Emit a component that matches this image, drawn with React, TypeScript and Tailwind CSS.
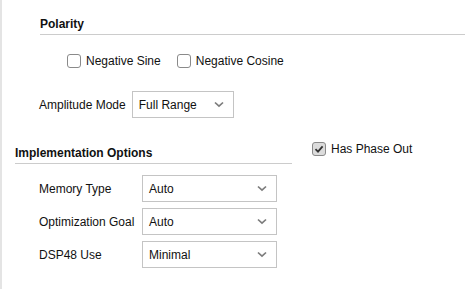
import React from "react";

function Checkbox({ checked = false }: { checked?: boolean }) {
  return (
    <span
      className={
        "flex h-[14px] w-[14px] shrink-0 items-center justify-center rounded-[3px] border border-[#8a8a8a] " +
        (checked ? "bg-[#dcdcdc]" : "bg-white")
      }
    >
      {checked && (
        <svg width="10" height="10" viewBox="0 0 10 10">
          <polyline points="1.5,5.2 4,7.6 8.6,2.4" fill="none" stroke="#333" strokeWidth="1.8" />
        </svg>
      )}
    </span>
  );
}

function Check({ label, checked }: { label: string; checked?: boolean }) {
  return (
    <label className="flex items-center gap-[5px] leading-[14px]">
      <Checkbox checked={checked} />
      <span>{label}</span>
    </label>
  );
}

function Select({ value, width }: { value: string; width: string }) {
  return (
    <div
      className={
        "flex h-[27px] items-center justify-between border border-[#c4c4c4] bg-white pl-[6px] pr-[9px] " + width
      }
    >
      <span>{value}</span>
      <svg width="10" height="7" viewBox="0 0 10 7">
        <polyline points="1,1.5 5,5.2 9,1.5" fill="none" stroke="#7c7c7c" strokeWidth="1.7" />
      </svg>
    </div>
  );
}

const rows = [
  { label: "Memory Type", value: "Auto" },
  { label: "Optimization Goal", value: "Auto" },
  { label: "DSP48 Use", value: "Minimal" },
];

export default function App() {
  return (
    <div className="flex h-[289px] w-[465px] overflow-hidden bg-white font-['Liberation_Sans',Arial,sans-serif] text-[12px] text-[#111]">
      <div className="w-[2px] shrink-0 bg-[#e4e4e4]" />
      <div className="flex flex-1 flex-col pl-[13px]">
        <div className="ml-[25px] mt-[17px] border-b border-[#cccccc] pb-[3px] font-bold leading-[14px]">
          Polarity
        </div>
        <div className="ml-[52px] mt-[19px] flex gap-[16px]">
          <Check label="Negative Sine" />
          <Check label="Negative Cosine" />
        </div>
        <div className="ml-[24px] mt-[23px] flex items-center gap-[6px]">
          <span>Amplitude Mode</span>
          <Select value="Full Range" width="w-[102px]" />
        </div>
        <div className="mt-[23px] flex">
          <div className="w-[277px] pt-[5px]">
            <div className="border-b border-[#cccccc] pb-[3px] font-bold leading-[14px]">
              Implementation Options
            </div>
            <div className="ml-[24px] mt-[11px] flex flex-col gap-[6px]">
              {rows.map((r) => (
                <div key={r.label} className="flex items-center">
                  <span className="w-[103px]">{r.label}</span>
                  <Select value={r.value} width="w-[135px]" />
                </div>
              ))}
            </div>
          </div>
          <div className="ml-[20px] mt-[1px]">
            <Check label="Has Phase Out" checked />
          </div>
        </div>
      </div>
    </div>
  );
}
